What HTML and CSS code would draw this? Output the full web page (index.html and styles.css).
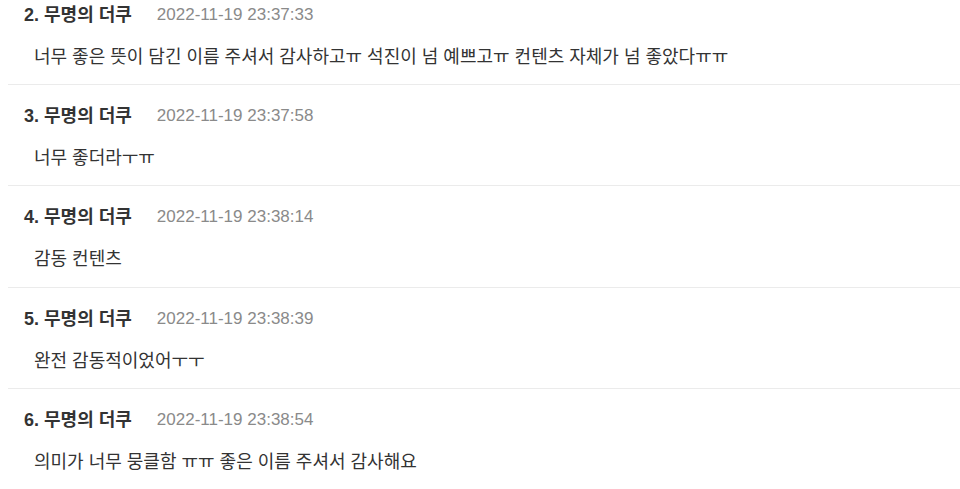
FILE: index.html
```html
<!DOCTYPE html>
<html lang="ko">
<head>
    <meta charset="UTF-8">
    <meta name="viewport" content="width=device-width, initial-scale=1.0">
    <title>댓글</title>
    <link rel="stylesheet" href="styles.css">
</head>
<body>
    <ul class="comment-list">
        <li class="comment">
            <div class="comment-head">
                <span class="comment-name">2. 무명의 더쿠</span>
                <span class="comment-date">2022-11-19 23:37:33</span>
            </div>
            <p class="comment-text">너무 좋은 뜻이 담긴 이름 주셔서 감사하고ㅠ 석진이 넘 예쁘고ㅠ 컨텐츠 자체가 넘 좋았다ㅠㅠ</p>
        </li>
        <li class="comment">
            <div class="comment-head">
                <span class="comment-name">3. 무명의 더쿠</span>
                <span class="comment-date">2022-11-19 23:37:58</span>
            </div>
            <p class="comment-text">너무 좋더라ㅜㅠ</p>
        </li>
        <li class="comment">
            <div class="comment-head">
                <span class="comment-name">4. 무명의 더쿠</span>
                <span class="comment-date">2022-11-19 23:38:14</span>
            </div>
            <p class="comment-text">감동 컨텐츠</p>
        </li>
        <li class="comment">
            <div class="comment-head">
                <span class="comment-name">5. 무명의 더쿠</span>
                <span class="comment-date">2022-11-19 23:38:39</span>
            </div>
            <p class="comment-text">완전 감동적이었어ㅜㅜ</p>
        </li>
        <li class="comment">
            <div class="comment-head">
                <span class="comment-name">6. 무명의 더쿠</span>
                <span class="comment-date">2022-11-19 23:38:54</span>
            </div>
            <p class="comment-text">의미가 너무 뭉클함 ㅠㅠ 좋은 이름 주셔서 감사해요</p>
        </li>
    </ul>
</body>
</html>
```

FILE: styles.css
```css
* {
    margin: 0;
    padding: 0;
    box-sizing: border-box;
}

body {
    font-family: 'Liberation Sans', 'Noto Sans CJK KR', sans-serif;
    background-color: #fff;
    color: #333;
    overflow: hidden;
}

/* list is scrolled a little, first item is cut at the top */
.comment-list {
    list-style: none;
    margin-top: -16.33px;
    padding-left: 8px;
}

.comment {
    padding: 20px 16px 16.33px;
    border-bottom: 1px solid #ebebeb;
}

.comment-head {
    display: flex;
    align-items: center;
    gap: 25px;
    height: 22px;
    line-height: 22px;
}

.comment-name {
    font-size: 18px;
    font-weight: bold;
    color: #333;
}

.comment-date {
    font-size: 17px;
    color: #8a8a8a;
}

.comment-text {
    height: 22px;
    margin-top: 20px;
    padding-left: 10px;
    font-size: 18px;
    line-height: 22px;
    color: #333;
}
```
